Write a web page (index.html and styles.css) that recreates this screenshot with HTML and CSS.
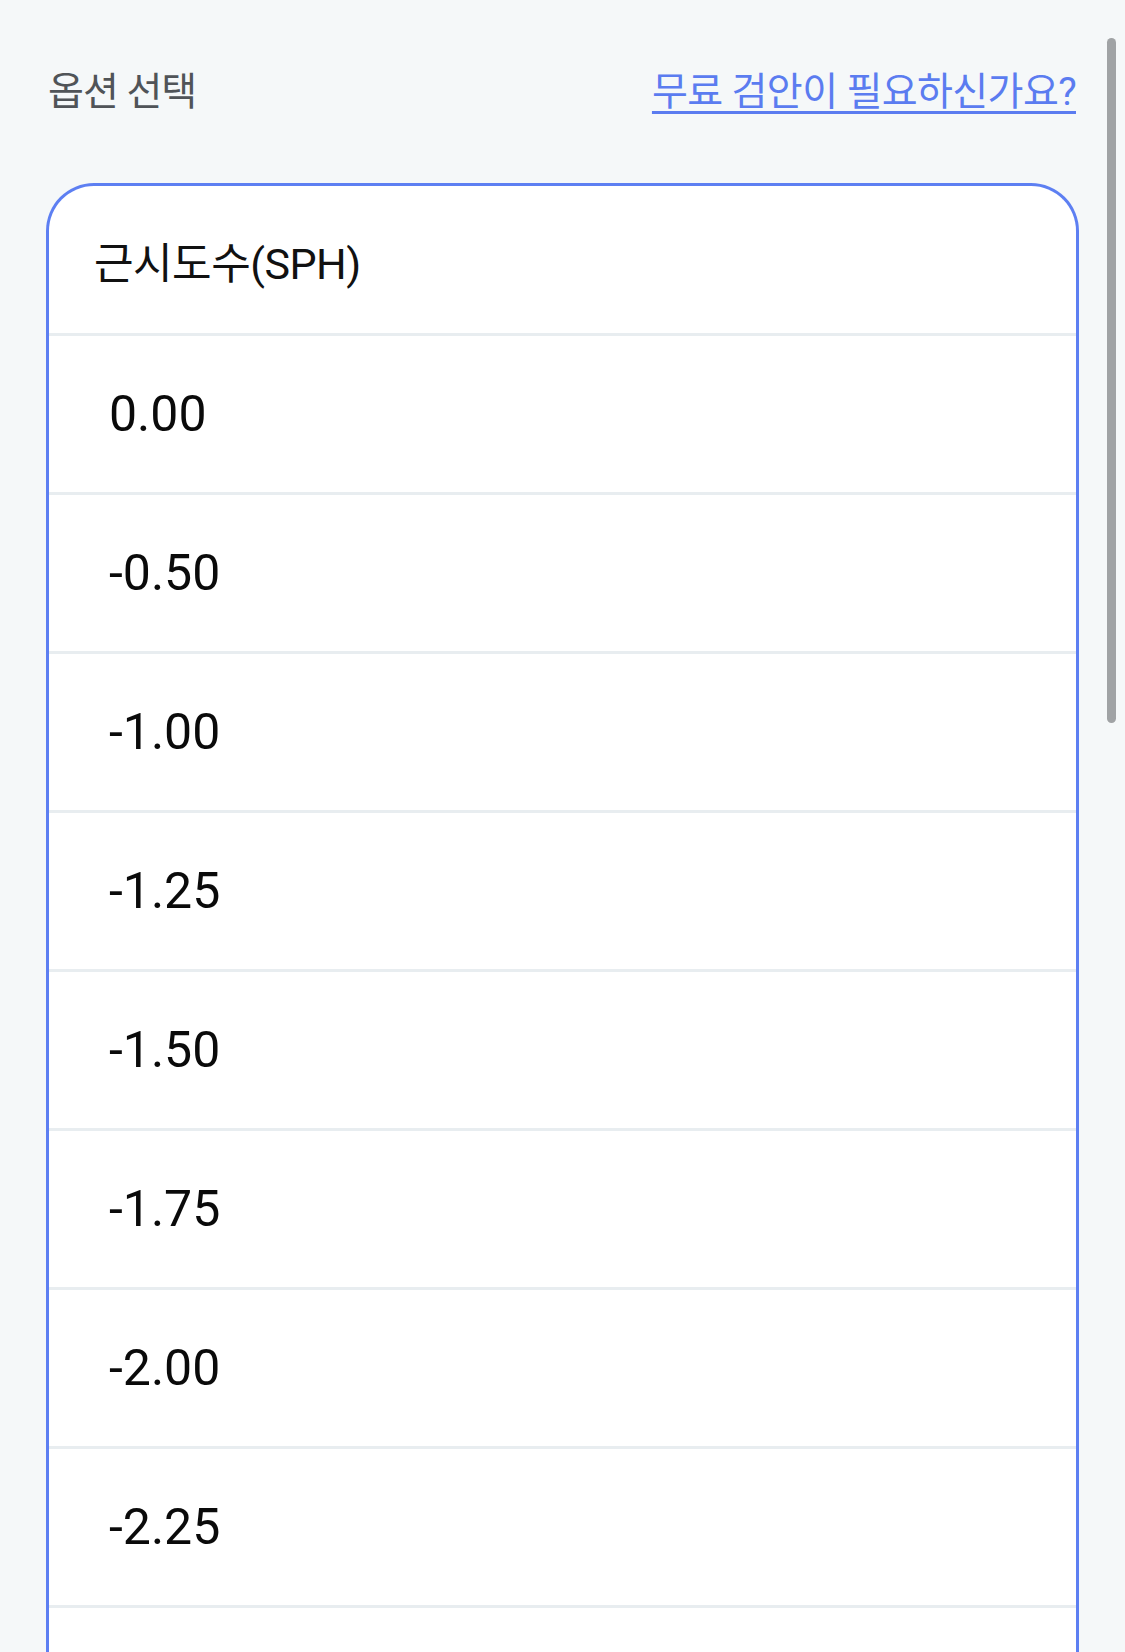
FILE: index.html
```
<!DOCTYPE html>
<html lang="ko">
<head>
    <meta charset="UTF-8">
    <meta name="viewport" content="width=device-width, initial-scale=1.0">
    <title>옵션 선택</title>
    <link rel="stylesheet" href="styles.css">
</head>
<body>
    <div class="sheet">
        <div class="top">
            <span class="top-title">옵션 선택</span>
            <a class="top-link" href="#">무료 검안이 필요하신가요?</a>
        </div>

        <div class="option-box">
            <div class="option-head">근시도수(SPH)</div>
            <ul class="option-list">
                <li>0.00</li>
                <li>-0.50</li>
                <li>-1.00</li>
                <li>-1.25</li>
                <li>-1.50</li>
                <li>-1.75</li>
                <li>-2.00</li>
                <li>-2.25</li>
                <li>-2.50</li>
                <li>-2.75</li>
            </ul>
        </div>

        <div class="scroll-thumb"></div>
    </div>
</body>
</html>
```

FILE: styles.css
```
html, body {
    margin: 0;
    padding: 0;
    height: 100%;
    overflow: hidden;
}
* {
    font-family: Roboto, "Noto Sans CJK KR", sans-serif;
    box-sizing: border-box;
}
body {
    background-color: #f5f8f9;
}

.sheet {
    position: relative;
    height: 100%;
    padding: 0 46px;
    background-color: #f5f8f9;
}

.top {
    height: 183px;
    padding-bottom: 7px;
    display: flex;
    align-items: center;
    justify-content: space-between;
}
.top-title {
    font-size: 39px;
    letter-spacing: -1px;
    color: #505458;
    padding-left: 2px;
}
.top-link {
    font-size: 39px;
    letter-spacing: -0.6px;
    margin-right: 3px;
    color: #5b7cf0;
    text-decoration: underline;
    text-decoration-thickness: 3px;
    text-underline-offset: 6px;
}

.option-box {
    background-color: white;
    border: 3px solid #5d7ff2;
    border-radius: 48px 48px 0 0;
    border-bottom: none;
}
.option-head {
    height: 147px;
    display: flex;
    align-items: center;
    padding-left: 45px;
    font-size: 43px;
    letter-spacing: -0.5px;
    color: #111;
}
.option-list {
    list-style-type: none;
    margin: 0;
    padding: 0;
}
.option-list li {
    height: 159px;
    border-top: 3px solid #e8edf0;
    display: flex;
    align-items: center;
    padding-left: 60px;
    font-size: 50px;
    color: #0a0a0a;
}

.scroll-thumb {
    position: absolute;
    top: 38px;
    right: 9px;
    width: 9px;
    height: 685px;
    border-radius: 5px;
    background-color: #a0a3a5;
}
```
